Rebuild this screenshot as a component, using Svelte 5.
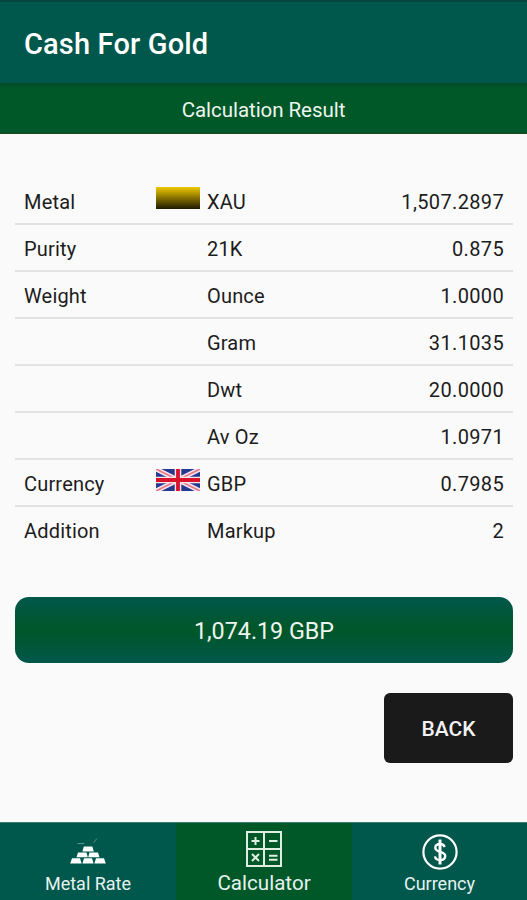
<script lang="ts">
	type Row = {
		label?: string;
		icon?: 'gold' | 'gbp';
		unit: string;
		value: string;
	};

	const rows: Row[] = [
		{ label: 'Metal', icon: 'gold', unit: 'XAU', value: '1,507.2897' },
		{ label: 'Purity', unit: '21K', value: '0.875' },
		{ label: 'Weight', unit: 'Ounce', value: '1.0000' },
		{ unit: 'Gram', value: '31.1035' },
		{ unit: 'Dwt', value: '20.0000' },
		{ unit: 'Av Oz', value: '1.0971' },
		{ label: 'Currency', icon: 'gbp', unit: 'GBP', value: '0.7985' },
		{ label: 'Addition', unit: 'Markup', value: '2' }
	];

	const tabs = ['Metal Rate', 'Calculator', 'Currency'];
	let active = $state('Calculator');
</script>

<div class="app">
	<header>
		<h1>Cash For Gold</h1>
	</header>
	<h2>Calculation Result</h2>

	<main>
		<div class="rows">
			{#each rows as row}
				<div class="row">
					<span>{row.label ?? ''}</span>
					<span class="icon">
						{#if row.icon === 'gold'}
							<i class="gold"></i>
						{:else if row.icon === 'gbp'}
							<svg width="44" height="22" viewBox="0 0 60 30" preserveAspectRatio="none">
								<rect width="60" height="30" fill="#24398f" />
								<path d="M0 0L60 30M60 0L0 30" stroke="#f6e6ee" stroke-width="6.5" />
								<path d="M0 0L60 30M60 0L0 30" stroke="#e87a8a" stroke-width="2.4" />
								<path d="M30 0V30M0 15H60" stroke="#f8e3e8" stroke-width="9" />
								<path d="M30 0V30M0 15H60" stroke="#d8132c" stroke-width="5.2" />
							</svg>
						{/if}
					</span>
					<span>{row.unit}</span>
					<span class="value">{row.value}</span>
				</div>
			{/each}
		</div>

		<div class="total">1,074.19 GBP</div>
		<button class="back">BACK</button>
	</main>

	<nav>
		{#each tabs as tab}
			<button class="tab" class:active={tab === active} onclick={() => (active = tab)}>
				{#if tab === 'Metal Rate'}
					<svg width="36" height="36" viewBox="0 0 36 36" fill="#fff">
						<path d="M13.8 12.5h8.6l1.4 5h-11.4z" />
						<path d="M8 18.4h8.5l1.3 4.9H6.5zM19.5 18.4H28l1.5 4.9H18.2z" />
						<path d="M2 24.2h8l1.6 5.4H.2zM14 24.2h8l1.6 5.4H12.4zM26 24.2h8l1.8 5.4H24.4z" />
						<path d="M7.5 9.5h7M23.5 8.5l3.5-4" stroke="#fff" opacity=".35" />
					</svg>
				{:else if tab === 'Calculator'}
					<svg width="38" height="38" viewBox="0 0 38 38" fill="none" stroke="#dfeee0" stroke-width="2">
						<path d="M2 2h34v34H2zM19 2v34M2 19h34" />
						<path d="M6.5 11h8M10.5 7v8M24 11h8.5M7 24l7 7M14 24l-7 7M24 25.7h8.5M24 29.8h8.5" />
					</svg>
				{:else}
					<svg width="36" height="36" viewBox="0 0 36 36" fill="none" stroke="#fff">
						<circle cx="18" cy="18" r="16.6" stroke-width="2.2" />
						<path
							d="M22.7 13c-.7-2.1-2.3-3-4.7-3-2.8 0-4.7 1.4-4.7 3.7 0 5.3 9.9 3.1 9.9 8.2 0 2.6-2.2 4.1-5.2 4.1-2.7 0-4.6-1.2-5-3.6"
							stroke-width="2.4"
						/>
						<path d="M18 5.5v25" stroke-width="3" />
					</svg>
				{/if}
				<span>{tab}</span>
			</button>
		{/each}
	</nav>
</div>

<style>
	:global(body) {
		margin: 0;
		background: #fafafa;
	}

	.app {
		display: flex;
		flex-direction: column;
		height: 900px;
		font-family: Roboto, sans-serif;
		color: #1c1c1c;
	}

	header {
		box-sizing: border-box;
		height: 83px;
		padding: 2px 24px 0;
		border-top: 2px solid #07463f;
		background: #00574b;
		display: flex;
		align-items: center;
	}
	h1 {
		margin: 0;
		font-size: 29px;
		font-weight: 500;
		letter-spacing: 0.15px;
		color: #fff;
	}
	h2 {
		box-sizing: border-box;
		height: 51px;
		margin: 0;
		padding-top: 3px;
		border-bottom: 1px solid #1b4a20;
		background: linear-gradient(#034a29, #005728 5px);
		color: #eef5ee;
		font-size: 20.5px;
		font-weight: 400;
		letter-spacing: -0.05px;
		line-height: 49px;
		text-align: center;
	}

	main {
		flex: 1;
		display: flex;
		flex-direction: column;
		padding: 44px 14px 0 15px;
	}
	.row {
		box-sizing: border-box;
		height: 47px;
		padding: 0 9px;
		border-bottom: 2px solid #e2e2e2;
		display: grid;
		grid-template-columns: 131px 52px 1fr 1fr;
		align-items: center;
		font-size: 20px;
		letter-spacing: 0.18px;
		line-height: 48px;
	}
	.row:last-child {
		border-bottom-color: transparent;
	}
	.icon {
		display: flex;
		padding: 0 0 8px 0.5px;
	}
	.gold {
		width: 44px;
		height: 22px;
		background: linear-gradient(#f0c800, #1c1900);
	}
	.value {
		letter-spacing: 0.35px;
		text-align: right;
	}

	.total {
		height: 66px;
		margin-top: 43px;
		border-radius: 14px;
		background: linear-gradient(#00574b, #005728 50%, #00574b);
		color: #eef5ee;
		font-size: 23.3px;
		line-height: 69px;
		text-align: center;
	}
	.back {
		align-self: flex-end;
		width: 129px;
		height: 70px;
		margin-top: 30px;
		padding: 1px 0 0;
		border: 0;
		border-radius: 6px;
		background: #1a1a1a;
		color: #f2f2f2;
		font: 500 21px Roboto, sans-serif;
	}

	nav {
		height: 78px;
		background: #00574b;
		display: grid;
		grid-template-columns: 176px 176px 175px;
	}
	.tab {
		border: 0;
		padding: 11px 0 0;
		border-top: 1px solid #3c7d73;
		background: none;
		color: #e6f2f0;
		font: 18px Roboto, sans-serif;
		display: flex;
		flex-direction: column;
		align-items: center;
		gap: 3px;
	}
	.tab.active {
		padding-top: 7px;
		background: #005728;
		font-size: 20.6px;
	}
</style>
